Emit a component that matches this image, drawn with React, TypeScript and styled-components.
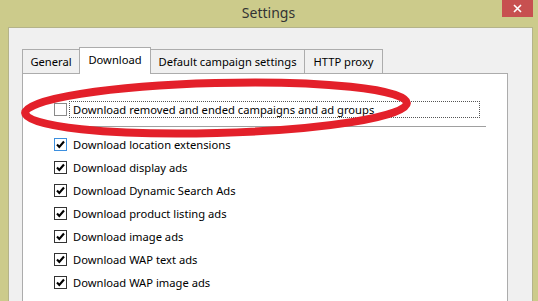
import React from 'react'
import styled, { createGlobalStyle } from 'styled-components'

const GlobalStyle = createGlobalStyle`
  html, body {
    margin: 0;
    padding: 0;
    background: #cccb8b;
    overflow: hidden;
  }
  body {
    font-family: "Noto Sans", "Liberation Sans", sans-serif;
  }
`

const tabs = [
  { label: 'General', width: 58 },
  { label: 'Download', width: 72, active: true },
  { label: 'Default campaign settings', width: 155 },
  { label: 'HTTP proxy', width: 79 },
]

const options = [
  { label: 'Download location extensions', hover: true },
  { label: 'Download display ads' },
  { label: 'Download Dynamic Search Ads' },
  { label: 'Download product listing ads' },
  { label: 'Download image ads' },
  { label: 'Download WAP text ads' },
  { label: 'Download WAP image ads' },
]

const CheckBox = ({ checked, hover }: { checked?: boolean; hover?: boolean }) => (
  <S.Box $checked={checked} $hover={hover}>
    {checked && (
      <svg width="11" height="11" viewBox="0 0 11 11">
        <polyline points="2,5.5 4.3,8 9,2.5" fill="none" stroke="#000" strokeWidth="2.1" />
      </svg>
    )}
  </S.Box>
)

const App = () => {
  return (
    <S.Window>
      <GlobalStyle />
      <S.TitleBar>
        <span />
        <S.Title>Settings</S.Title>
        <S.Close>
          <svg width="9" height="9" viewBox="0 0 9 9">
            <path d="M1 1 L8 8 M8 1 L1 8" stroke="#fff" strokeWidth="1.6" />
          </svg>
        </S.Close>
      </S.TitleBar>
      <S.Client>
        <S.TabStrip>
          {tabs.map((t) => (
            <S.Tab key={t.label} $width={t.width} $active={t.active}>
              {t.label}
            </S.Tab>
          ))}
        </S.TabStrip>
        <S.Panel>
          <S.Row>
            <CheckBox />
            <S.FocusLabel>Download removed and ended campaigns and ad groups</S.FocusLabel>
          </S.Row>
          <S.Separator />
          <S.List>
            {options.map((o) => (
              <S.Item key={o.label}>
                <CheckBox checked hover={o.hover} />
                <S.Label>{o.label}</S.Label>
              </S.Item>
            ))}
          </S.List>
        </S.Panel>
      </S.Client>
      {/* red marker drawn on top of the screenshot */}
      <S.Marker width="538" height="301" viewBox="0 0 538 301">
        <ellipse
          cx="216"
          cy="108"
          rx="191"
          ry="25"
          fill="none"
          stroke="#e3202a"
          strokeWidth="8"
          transform="rotate(-1.5 216 108)"
        />
      </S.Marker>
    </S.Window>
  )
}

export default App

const S = {
  Window: styled.div`
    position: relative;
    width: 538px;
    height: 301px;
    display: flex;
    flex-direction: column;
    background: #cccb8b;
    overflow: hidden;
  `,
  TitleBar: styled.div`
    height: 27px;
    flex: 0 0 27px;
    display: grid;
    grid-template-columns: 1fr auto 1fr;
  `,
  Title: styled.div`
    align-self: center;
    font-size: 14px;
    color: #333;
    margin-top: -3px;
    margin-left: -1px;
  `,
  Close: styled.div`
    justify-self: end;
    align-self: start;
    margin-right: 5px;
    width: 31px;
    height: 17px;
    background: #c75050;
    display: flex;
    align-items: center;
    justify-content: center;
  `,
  Client: styled.div`
    flex: 1;
    margin: 0 5px 0 8px;
    background: #f0f0f0;
    border: 1px solid #b4b38a;
    border-bottom: none;
    padding: 19px 24px 0 13px;
    display: flex;
    flex-direction: column;
  `,
  TabStrip: styled.div`
    display: flex;
    align-items: flex-end;
    height: 27px;
    margin-bottom: -1px;
    position: relative;
    z-index: 1;
  `,
  Tab: styled.div<{ $width: number; $active?: boolean }>`
    box-sizing: border-box;
    width: ${(p) => p.$width}px;
    height: ${(p) => (p.$active ? 27 : 25)}px;
    margin-left: -1px;
    &:first-child {
      margin-left: 0;
    }
    border: 1px solid #acacac;
    border-bottom: ${(p) => (p.$active ? 'none' : '1px solid #acacac')};
    background: ${(p) => (p.$active ? '#fff' : '#f0f0f0')};
    font-size: 11.2px;
    color: #000;
    display: flex;
    align-items: center;
    justify-content: center;
    padding-bottom: ${(p) => (p.$active ? 3 : 0)}px;
  `,
  Panel: styled.div`
    flex: 1;
    background: #fff;
    border: 1px solid #acacac;
    border-bottom: none;
    padding: 27px 0 0 23px;
  `,
  Row: styled.div`
    display: flex;
    align-items: center;
    height: 17px;
    padding-left: 8px;
  `,
  Box: styled.div<{ $checked?: boolean; $hover?: boolean }>`
    box-sizing: border-box;
    width: 13px;
    height: 13px;
    flex: 0 0 13px;
    background: #fff;
    border: 1px solid ${(p) => (p.$hover ? '#3c8fdf' : p.$checked ? '#333' : '#8a8a8a')};
    display: flex;
    align-items: center;
    justify-content: center;
  `,
  FocusLabel: styled.div`
    box-sizing: border-box;
    width: 411px;
    height: 17px;
    margin-left: 2px;
    padding: 0 3px;
    border: 1px dotted #555;
    font-size: 11.2px;
    line-height: 15px;
    color: #000;
    white-space: nowrap;
  `,
  Separator: styled.div`
    width: 440px;
    height: 1px;
    margin-top: 8px;
    background: #a0a0a0;
  `,
  List: styled.div`
    margin-top: 6px;
    padding-left: 8px;
    display: flex;
    flex-direction: column;
  `,
  Item: styled.div`
    display: flex;
    align-items: center;
    height: 23px;
  `,
  Label: styled.span`
    margin-left: 6px;
    font-size: 11.2px;
    color: #000;
    white-space: nowrap;
  `,
  Marker: styled.svg`
    position: absolute;
    left: 0;
    top: 0;
    pointer-events: none;
  `,
}
